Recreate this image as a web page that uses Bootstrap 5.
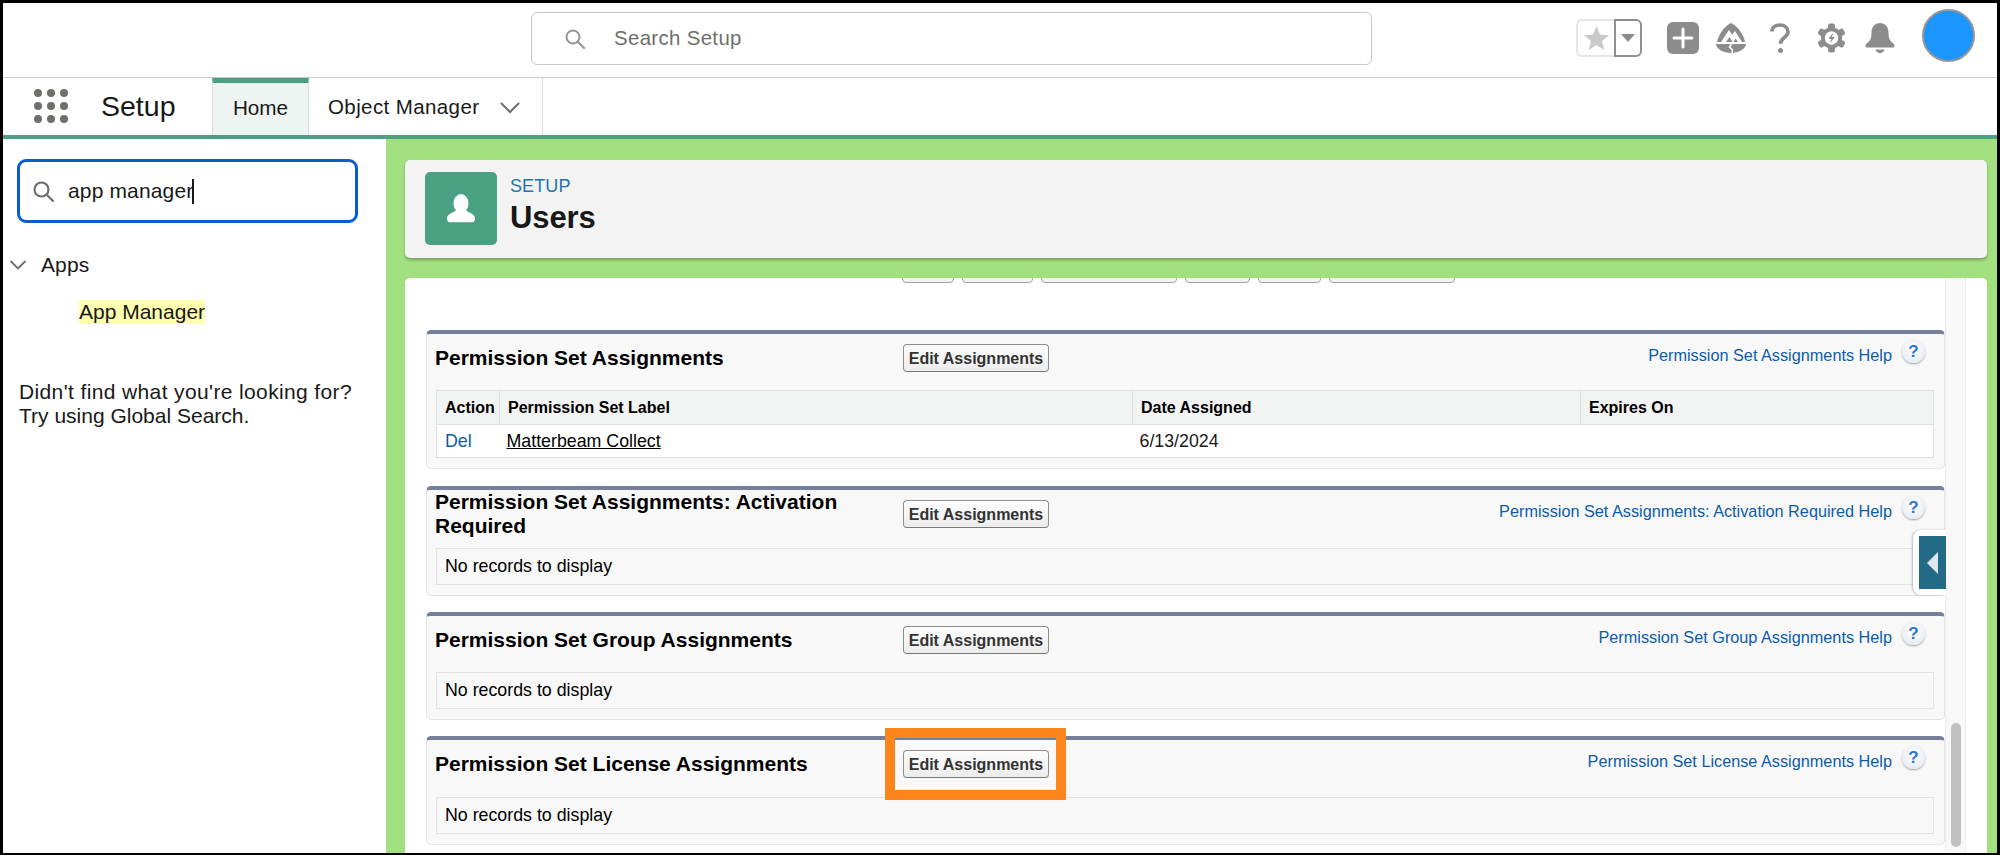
<!DOCTYPE html>
<html lang="en">
<head>
<meta charset="utf-8">
<title>Setup - Users</title>
<link href="https://cdn.jsdelivr.net/npm/bootstrap@5.3.0/dist/css/bootstrap.min.css" rel="stylesheet">
<style>
html,body{height:855px;overflow:hidden;}
body{font-family:"Liberation Sans",Arial,sans-serif;color:#181818;background:#000;}
.frame{width:2000px;height:855px;border:solid #000;border-width:3px 3px 2px 3px;background:#fff;}
.top-bar{height:75px;flex:none;border-bottom:1px solid #c9c9c9;padding-top:9px;position:relative;}
.global-search{margin-left:528px;width:841px;height:53px;border:1px solid #c9c9c9;border-radius:6px;padding-left:33px;gap:29px;color:#706e6b;font-size:20.4px;letter-spacing:.35px;}
.tools{position:absolute;left:1573px;top:6px;}
.fav-pair{width:66px;height:38px;margin-top:10px;}
.fav-l{width:38px;height:38px;border:2px solid #e6e6e6;border-right:0;border-radius:6px 0 0 6px;}
.fav-r{width:28px;height:38px;border:2px solid #8f8f8f;border-radius:0 6px 6px 0;}
.tool{display:block;}
.tool-plus{margin:13px 0 0 25px;}
.tool-trail{margin:14px 0 0 17px;}
.tool-help{margin:14px 0 0 24px;}
.tool-gear{margin:14px 0 0 27px;}
.tool-bell{margin:14px 0 0 19px;}
.avatar{width:53px;height:53px;margin-left:27px;border-radius:50%;background:#1b96ff;border:2px solid #969696;}
.nav-row{height:61px;flex:none;border-bottom:4px solid #4aa181;}
.waffle{width:98px;padding:0 33px 0 31px;gap:5px;flex-wrap:wrap;height:34px;margin-top:11px;flex:none;}
.waffle i{display:block;width:8px;height:8px;border-radius:50%;background:#706e6b;}
.app-name{width:111px;font-size:28.5px;line-height:56px;}
.tab-home{width:97px;height:57px;background:#edf4f2;border-top:5px solid #4aa181;border-left:1px solid #dddbda;border-right:1px solid #dddbda;font-size:20.7px;line-height:50px;text-align:center;}
.tab-obj{width:234px;height:57px;border-right:1px solid #dddbda;padding:2px 0 0 19px;gap:21px;font-size:20.5px;letter-spacing:.4px;}
.body-row{height:714px;}
.side{width:383px;flex:none;padding:20px 0 0 14px;font-size:21px;}
.side-search{width:341px;height:64px;border:3px solid #0b5cce;border-radius:9px;padding-left:13px;gap:14px;letter-spacing:.15px;}
.caret-bar{display:inline-block;width:1.5px;height:25px;background:#181818;margin-left:-1px;vertical-align:-6px;}
.side-group{margin:28px 0 0 -7px;line-height:28px;gap:15px;letter-spacing:.1px;}
.side-item{margin:21px 0 0 62px;line-height:24px;}
.side-item span{background:#ffffb0;display:inline-block;}
.side-msg{margin:56px 0 0 2px;line-height:24px;width:360px;}
.msg-wide{letter-spacing:.37px;}
.main{flex:1;background:#a2e07f;padding:21px 10px 0 19px;min-width:0;}
.page-head{height:98px;background:#f3f3f3;border-radius:5px;box-shadow:0 2px 3px rgba(0,0,0,.28);padding:12px 20px;gap:13px;}
.head-icon{width:72px;height:73px;background:#4aa181;border-radius:5px;flex:none;}
.crumb{font-size:18px;color:#2574a9;line-height:22px;letter-spacing:.1px;margin-top:3px;}
.page-title{font-size:31px;font-weight:700;line-height:40px;margin:1px 0 0;letter-spacing:-.1px;}
.panel{background:#fff;height:575px;margin-top:20px;border-radius:5px 5px 0 0;overflow:hidden;padding-right:21px;}
.scroll-body{flex:1;padding-left:21px;min-width:0;position:relative;}
.clip-row{height:5px;overflow:hidden;margin-bottom:47px;padding-left:476px;gap:8px;}
.clip-row i{display:block;height:28px;border:1px solid #a3a3a3;border-radius:4px;background:#f2f2f2;}
.track{width:21px;flex:none;background:#f8f8f8;border-left:1px solid #ececec;border-right:1px solid #ececec;padding:445px 4px 0 5px;}
.thumb{height:124px;background:#c1c1c1;border-radius:6px;}
.perm-sec{background:#f8f8f8;border:1px solid #e4e4e4;border-top:4px solid #76809a;border-radius:5px;margin-bottom:16px;padding:0 10px 10px 9px;}
.sec-first{margin-bottom:17px;}
.sec-head{height:56px;}
.sec-last .sec-head{height:57px;}
.sec-title{width:467px;margin-left:-1px;flex:none;font-size:21px;font-weight:700;line-height:24px;padding-top:12px;color:#000;}
.sec-two .sec-head{height:58px;}
.sec-two .sec-title{padding-top:0;padding-right:40px;}
.edit-btn{width:146px;height:28px;margin:10px 0 0 1px;padding:0;border:1px solid #8e8e8e;border-bottom-color:#7a7a7a;border-radius:4px;background:linear-gradient(#fdfdfd,#ececec);color:#333;font-size:16px;font-weight:700;line-height:25px;flex:none;white-space:nowrap;}
.help-wrap{margin-left:auto;margin-right:9px;gap:10px;padding-top:6px;}
.help-link{font-size:16.25px;line-height:24px;margin-top:3px;color:#0b5cab;text-decoration:none;}
.help-q{width:23px;height:23px;border-radius:50%;background:radial-gradient(circle at 50% 40%,#fff,#dfe6f0);box-shadow:0 1px 2px rgba(0,0,0,.35);color:#2c74d8;font-size:17px;font-weight:700;line-height:23px;text-align:center;}
.perm-table{table-layout:fixed;width:100%;margin:0;background:#fff;border:1px solid #e0e0e0;font-size:17.8px;}
.perm-table th{background:#f2f3f3;font-size:16px;color:#000;height:34px;padding:0 8px;border-bottom:1px solid #e0e0e0;border-right:1px solid #e0e0e0;vertical-align:middle;font-weight:700;}
.perm-table th:last-child{border-right:0;}
.perm-table td{height:33px;padding:0 7px;vertical-align:middle;color:#181818;}
.perm-table th:first-child,.perm-table td:first-child{padding-left:8px;}
.del-link{color:#0b5cab;text-decoration:none;}
.label-link{color:#000;text-decoration:underline;}
.empty-box{height:37px;border:1px solid #e3e3e3;padding-left:8px;font-size:17.8px;color:#000;line-height:35px;}
.handle{position:absolute;left:1508px;top:252px;width:33px;height:65px;background:#fff;border-radius:8px 0 0 8px;box-shadow:-1px 0 2px rgba(0,0,0,.25);padding:6px 0 6px 6px;}
.handle div{height:53px;background:#236a87;}
.mark-box{position:absolute;left:480px;top:450px;width:181px;height:72px;border:10px solid #fd851b;}
</style>
</head>
<body>
<div class="frame d-flex flex-column">
  <header class="top-bar">
    <div class="global-search d-flex align-items-center">
      <svg width="20" height="20" viewBox="0 0 20 20" fill="none" stroke="#969492" stroke-width="2"><circle cx="8" cy="8" r="6.5"/><path d="M13 13l6 6" stroke-linecap="round"/></svg>
      <span>Search Setup</span>
    </div>
    <div class="tools d-flex">
      <div class="fav-pair d-flex">
        <div class="fav-l d-flex align-items-center justify-content-center">
          <svg width="25" height="24" viewBox="0 0 25 24"><path fill="#c9c9c9" d="M12.5 0l3.4 8.6 9.1.6-7 5.8 2.3 9-7.800-5-7.800 5 2.300-9-7-5.800 9.100-.6z"/></svg>
        </div>
        <div class="fav-r d-flex align-items-center justify-content-center">
          <svg width="14" height="8" viewBox="0 0 14 8"><path fill="#8c8c8c" d="M0 0h14L7 8z"/></svg>
        </div>
      </div>
      <svg class="tool tool-plus" width="32" height="32" viewBox="0 0 32 32"><rect width="32" height="32" rx="6" fill="#8c8c8c"/><path d="M16 7v18M7 16h18" stroke="#fff" stroke-width="3" stroke-linecap="round"/></svg>
      <svg class="tool tool-trail" width="30" height="30" viewBox="0 0 30 30"><path fill="#8c8c8c" d="M15 0C21 2.500 27.500 11 29 19H1C2.500 11 9 2.500 15 0z"/><path fill="#fff" d="M5 19L13 7l3 4.500L19 8l7 11z"/><path fill="#8c8c8c" d="M10 19l3.500-5 3 5zM17.500 19l2-3.500 2.500 3.500z"/><path fill="#8c8c8c" d="M0 21h30c0 5-8 9-15 9S0 26 0 21z"/><path fill="none" stroke="#fff" stroke-width="1.500" d="M15.500 21l-2 3 3 3-.5 3"/></svg>
      <svg class="tool tool-help" width="20" height="30" viewBox="0 0 20 30" fill="none"><path d="M2 8.500C2 4.500 5.500 2 10 2s8 2.800 8 6.800c0 6-7.500 5.500-7.500 12" stroke="#8c8c8c" stroke-width="3.600"/><circle cx="10.500" cy="27.500" r="2.500" fill="#8c8c8c"/></svg>
      <svg class="tool tool-gear" width="29" height="30" viewBox="0 0 30 30"><g fill="#8c8c8c"><circle cx="15" cy="15" r="11"/><rect x="11.500" y="0" width="7" height="30" rx="2"/><rect x="11.500" y="0" width="7" height="30" rx="2" transform="rotate(60 15 15)"/><rect x="11.500" y="0" width="7" height="30" rx="2" transform="rotate(120 15 15)"/></g><circle cx="15" cy="15" r="7" fill="#fff"/><path fill="#8c8c8c" d="M16.500 9.500l-4.500 6.500h3l-1.500 4.500 5-6.500h-3z"/></svg>
      <svg class="tool tool-bell" width="30" height="30" viewBox="0 0 30 30"><path fill="#8c8c8c" d="M15 0c5 0 8.500 4 8.500 9.500 0 6 1 8 5.300 11.500 1 .8 1.200 3.500-.8 3.500H2c-2 0-1.800-2.700-.8-3.500C5.500 17.500 6.500 15.500 6.500 9.500 6.500 4 10 0 15 0z"/><path fill="#8c8c8c" d="M10.500 26.500h9c0 1.500-2 3.500-4.500 3.500s-4.500-2-4.500-3.500z"/></svg>
      <div class="avatar"></div>
    </div>
  </header>

  <nav class="nav-row d-flex">
    <div class="waffle d-flex"><i></i><i></i><i></i><i></i><i></i><i></i><i></i><i></i><i></i></div>
    <div class="app-name">Setup</div>
    <div class="tab-home">Home</div>
    <div class="tab-obj d-flex align-items-center">
      <span>Object Manager</span>
      <svg width="20" height="12" viewBox="0 0 20 12" fill="none"><path d="M1.500 1.500L10 10l8.500-8.500" stroke="#706e6b" stroke-width="2" stroke-linecap="round"/></svg>
    </div>
  </nav>

  <div class="body-row d-flex">
    <aside class="side">
      <div class="side-search d-flex align-items-center">
        <svg width="21" height="21" viewBox="0 0 21 21" fill="none" stroke="#706e6b" stroke-width="2.200"><circle cx="8.500" cy="8.500" r="7"/><path d="M13.500 13.500l6.500 6.500" stroke-linecap="round"/></svg>
        <span>app manager<span class="caret-bar"></span></span>
      </div>
      <div class="side-group d-flex align-items-center">
        <svg width="16" height="10" viewBox="0 0 16 10" fill="none"><path d="M1 1.500l7 7 7-7" stroke="#706e6b" stroke-width="1.800" stroke-linecap="round"/></svg>
        <span>Apps</span>
      </div>
      <div class="side-item"><span>App Manager</span></div>
      <div class="side-msg"><span class="msg-wide">Didn't find what you're looking for?</span><br>Try using Global Search.</div>
    </aside>

    <main class="main">
      <div class="page-head d-flex">
        <div class="head-icon d-flex align-items-center justify-content-center">
          <svg width="30" height="30" viewBox="0 0 32 32"><ellipse cx="16" cy="10" rx="8" ry="10" fill="#fff"/><path fill="#fff" d="M1 26c0-5 7-6 10-9h10c3 3 10 4 10 9 0 2-1 4-3 4H4c-2 0-3-2-3-4z"/></svg>
        </div>
        <div>
          <div class="crumb">SETUP</div>
          <h1 class="page-title">Users</h1>
        </div>
      </div>

      <div class="panel d-flex">
        <div class="scroll-body">
          <div class="clip-row d-flex align-items-end">
            <i style="width:52px"></i><i style="width:71px"></i><i style="width:136px"></i><i style="width:65px"></i><i style="width:63px"></i><i style="width:126px"></i>
          </div>

          <section class="perm-sec sec-first">
            <div class="sec-head d-flex">
              <div class="sec-title">Permission Set Assignments</div>
              <button class="edit-btn" type="button">Edit Assignments</button>
              <div class="help-wrap d-flex"><a class="help-link" href="#">Permission Set Assignments Help</a><div class="help-q">?</div></div>
            </div>
            <table class="perm-table">
              <colgroup><col style="width:63px"><col style="width:633px"><col style="width:448px"><col></colgroup>
              <thead><tr><th>Action</th><th>Permission Set Label</th><th>Date Assigned</th><th>Expires On</th></tr></thead>
              <tbody><tr><td><a class="del-link" href="#">Del</a></td><td><a class="label-link" href="#">Matterbeam Collect</a></td><td>6/13/2024</td><td></td></tr></tbody>
            </table>
          </section>

          <section class="perm-sec sec-two">
            <div class="sec-head d-flex">
              <div class="sec-title">Permission Set Assignments: Activation Required</div>
              <button class="edit-btn" type="button">Edit Assignments</button>
              <div class="help-wrap d-flex"><a class="help-link" href="#">Permission Set Assignments: Activation Required Help</a><div class="help-q">?</div></div>
            </div>
            <div class="empty-box">No records to display</div>
          </section>

          <section class="perm-sec">
            <div class="sec-head d-flex">
              <div class="sec-title">Permission Set Group Assignments</div>
              <button class="edit-btn" type="button">Edit Assignments</button>
              <div class="help-wrap d-flex"><a class="help-link" href="#">Permission Set Group Assignments Help</a><div class="help-q">?</div></div>
            </div>
            <div class="empty-box">No records to display</div>
          </section>

          <section class="perm-sec sec-last">
            <div class="sec-head d-flex">
              <div class="sec-title">Permission Set License Assignments</div>
              <button class="edit-btn" type="button">Edit Assignments</button>
              <div class="help-wrap d-flex"><a class="help-link" href="#">Permission Set License Assignments Help</a><div class="help-q">?</div></div>
            </div>
            <div class="empty-box">No records to display</div>
          </section>

          <div class="handle"><div class="d-flex align-items-center justify-content-center"><svg width="12" height="22" viewBox="0 0 12 22"><path fill="#dfe8ec" d="M11 0v22L0 11z"/></svg></div></div>
          <div class="mark-box"></div>
        </div>
        <div class="track"><div class="thumb"></div></div>
      </div>
    </main>
  </div>
</div>
<script src="https://cdn.jsdelivr.net/npm/bootstrap@5.3.0/dist/js/bootstrap.bundle.min.js"></script>
</body>
</html>
